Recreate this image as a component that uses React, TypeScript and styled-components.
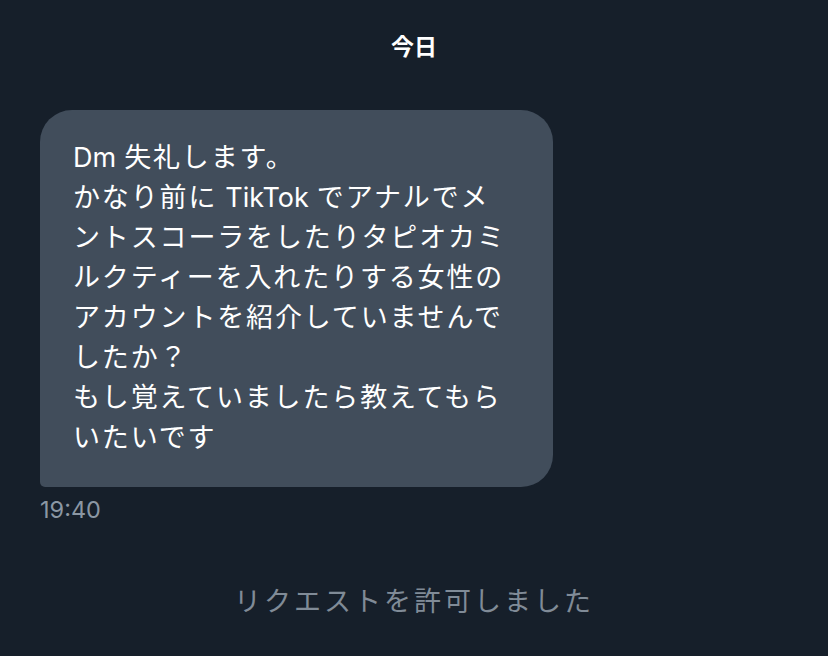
import React from "react";
import styled, { createGlobalStyle } from "styled-components";

const Global = createGlobalStyle`
  html, body { margin: 0; padding: 0; background: #161f2a; }
  body { font-family: "Inter", "Noto Sans CJK JP", "Noto Sans", sans-serif; }
`;

const Screen = styled.div`
  width: 828px;
  height: 656px;
  background: #161f2a;
  display: flex;
  flex-direction: column;
  overflow: hidden;
`;

const DayLabel = styled.div`
  height: 90px;
  display: flex;
  align-items: center;
  justify-content: center;
  color: #ffffff;
  font-family: "Noto Sans CJK JP", sans-serif;
  font-weight: 700;
  font-size: 23px;
`;

const MessageRow = styled.div`
  display: flex;
  flex-direction: column;
  align-items: flex-start;
  padding: 20px 40px 0;
`;

const Bubble = styled.div`
  width: 513px;
  box-sizing: border-box;
  background: #414d5b;
  border-radius: 32px 32px 32px 5px;
  padding: 28px 20px 29px 33px;
  color: #ffffff;
  font-size: 27px;
  line-height: 40px;
  letter-spacing: 1.85px;
`;

const Line = styled.span`
  display: block;
  white-space: nowrap;
  height: 40px;
`;

const Latin = styled.span<{ $lead?: boolean }>`
  letter-spacing: 0;
  margin-right: 8px;
  margin-left: ${(p) => (p.$lead ? "8px" : "0")};
`;

const Time = styled.div`
  margin-top: 8px;
  color: #8b97a4;
  font-family: "Inter", "Noto Sans", sans-serif;
  font-size: 23.5px;
  line-height: 30px;
`;

const Notice = styled.div`
  margin-top: 55px;
  text-align: center;
  color: #808b97;
  font-family: "Noto Sans CJK JP", sans-serif;
  font-size: 27px;
  letter-spacing: 3px;
  line-height: 40px;
`;

export default function App() {
  return (
    <Screen>
      <Global />
      <DayLabel>今日</DayLabel>
      <MessageRow>
        <Bubble>
          <Line>
            <Latin>Dm</Latin>失礼します。
          </Line>
          <Line>
            かなり前に<Latin $lead>TikTok</Latin>でアナルでメ
          </Line>
          <Line>ントスコーラをしたりタピオカミ</Line>
          <Line>ルクティーを入れたりする女性の</Line>
          <Line>アカウントを紹介していませんで</Line>
          <Line>したか？</Line>
          <Line>もし覚えていましたら教えてもら</Line>
          <Line>いたいです</Line>
        </Bubble>
        <Time>19:40</Time>
      </MessageRow>
      <Notice>リクエストを許可しました</Notice>
    </Screen>
  );
}
